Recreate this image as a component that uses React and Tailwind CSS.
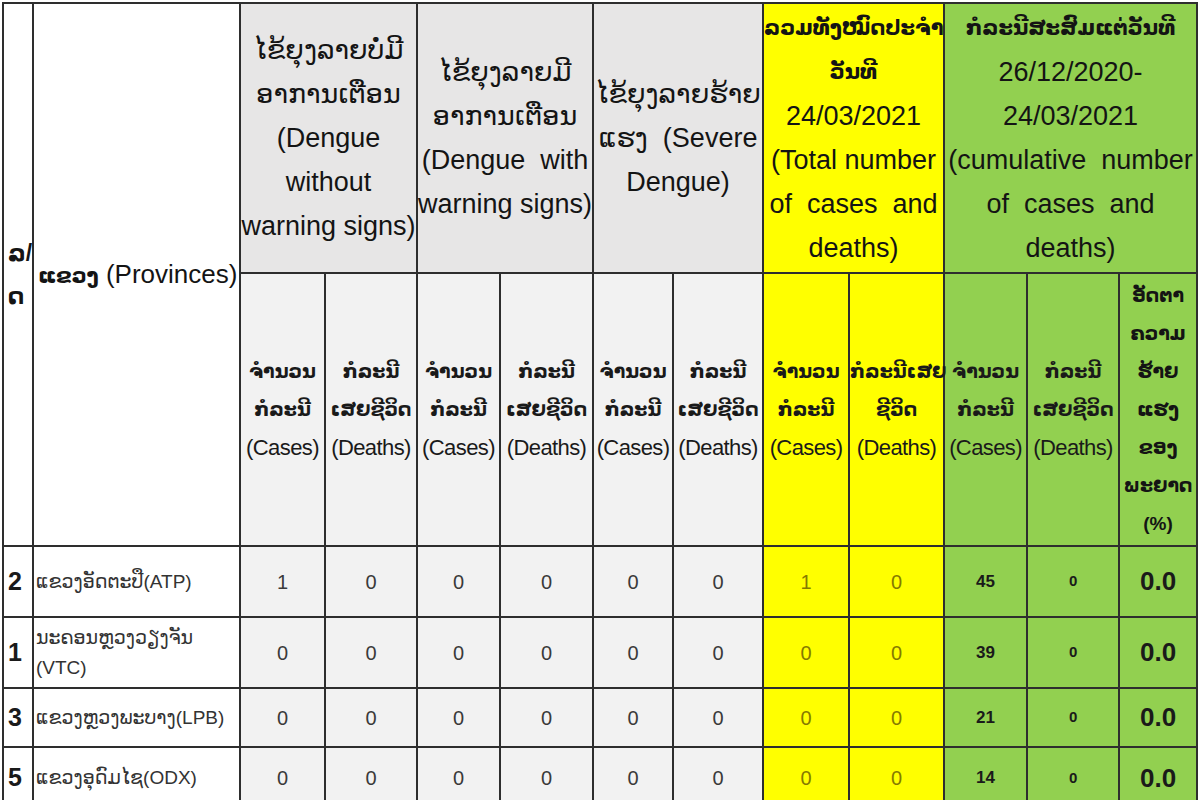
import React from "react";

const cols = [30, 207, 85, 92, 83, 93, 80, 90, 86, 95, 83, 92, 78];

const rows = [
  { n: "2", name: ["ແຂວງອັດຕະປື(ATP)"], gray: ["1", "0", "0", "0", "0", "0"], yel: ["1", "0"], cum: "45", h: "h-[71px]" },
  { n: "1", name: ["ນະຄອນຫຼວງວຽງຈັນ", "(VTC)"], gray: ["0", "0", "0", "0", "0", "0"], yel: ["0", "0"], cum: "39", h: "h-[71px]" },
  { n: "3", name: ["ແຂວງຫຼວງພະບາງ(LPB)"], gray: ["0", "0", "0", "0", "0", "0"], yel: ["0", "0"], cum: "21", h: "h-[59px]" },
  { n: "5", name: ["ແຂວງອຸດົມໄຊ(ODX)"], gray: ["0", "0", "0", "0", "0", "0"], yel: ["0", "0"], cum: "14", h: "h-[62px]" },
];

const bd = "border-2 border-[#2e2e2e]";

function Lines({ lines, bold = [] }) {
  return lines.map((l, i) => (
    <div key={i} className={`whitespace-pre ${bold.includes(i) ? "font-bold text-[21px]" : ""}`}>
      {l}
    </div>
  ));
}

function SubHead({ kind, bg }) {
  const lao = kind === "cases" ? ["ຈຳນວນ", "ກໍລະນີ"] : ["ກໍລະນີ", "ເສຍຊີວິດ"];
  const en = kind === "cases" ? "(Cases)" : "(Deaths)";
  return (
    <th className={`${bd} ${bg} p-0 text-center align-middle font-normal text-[22px] leading-[38px] text-[#1a1a1a]`}>
      <div className="whitespace-nowrap font-bold text-[19px]">{lao[0]}</div>
      <div className="whitespace-nowrap font-bold text-[19px]">{lao[1]}</div>
      <div className="whitespace-nowrap tracking-[-0.6px]">{en}</div>
    </th>
  );
}

export default function App() {
  return (
    <div className="w-[1200px] h-[800px] overflow-hidden bg-white pl-[2px] pt-[2px] font-['Liberation_Sans','DejaVu_Sans',sans-serif] text-[#141414]">
      <table className="table-fixed border-collapse w-[1194px]">
        <colgroup>
          {cols.map((w, i) => (
            <col key={i} style={{ width: w }} />
          ))}
        </colgroup>
        <thead>
          <tr className="h-[270px]">
            <th rowSpan={2} className={`${bd} bg-white p-0 pl-[4px] text-left align-middle font-bold text-[23px] leading-[43px]`}>
              <div>ລ/</div>
              <div>ດ</div>
            </th>
            <th rowSpan={2} className={`${bd} bg-white p-0 pl-[4px] text-left align-middle font-normal text-[26px] whitespace-nowrap`}>
              <span className="font-bold text-[21px]">ແຂວງ</span> (Provinces)
            </th>
            <th colSpan={2} className={`${bd} bg-[#e7e6e6] p-0 text-center align-middle font-normal text-[27px] leading-[44px]`}>
              <Lines lines={["ໄຂ້ຍຸງລາຍບໍ່ມີ", "ອາການເຕືອນ", "(Dengue", "without", "warning signs)"]} />
            </th>
            <th colSpan={2} className={`${bd} bg-[#e7e6e6] p-0 text-center align-middle font-normal text-[27px] leading-[44px]`}>
              <Lines lines={["ໄຂ້ຍຸງລາຍມີ", "ອາການເຕືອນ", "(Dengue  with", "warning signs)"]} />
            </th>
            <th colSpan={2} className={`${bd} bg-[#e7e6e6] p-0 text-center align-middle font-normal text-[27px] leading-[44px]`}>
              <Lines lines={["ໄຂ້ຍຸງລາຍຮ້າຍ", "ແຮງ  (Severe", "Dengue)"]} />
            </th>
            <th colSpan={2} className={`${bd} bg-[#ffff00] p-0 text-center align-middle font-normal text-[27px] leading-[44px]`}>
              <Lines
                lines={["ລວມທັງໝົດປະຈຳ", "ວັນທີ", "24/03/2021", "(Total number", "of  cases  and", "deaths)"]}
                bold={[0, 1]}
              />
            </th>
            <th colSpan={3} className={`${bd} bg-[#92d050] p-0 text-center align-middle font-normal text-[27px] leading-[44px]`}>
              <Lines
                lines={["ກໍລະນີສະສົມແຕ່ວັນທີ", "26/12/2020-", "24/03/2021", "(cumulative  number", "of  cases  and", "deaths)"]}
                bold={[0]}
              />
            </th>
          </tr>
          <tr className="h-[273px]">
            <SubHead kind="cases" bg="bg-[#f2f2f2]" />
            <SubHead kind="deaths" bg="bg-[#f2f2f2]" />
            <SubHead kind="cases" bg="bg-[#f2f2f2]" />
            <SubHead kind="deaths" bg="bg-[#f2f2f2]" />
            <SubHead kind="cases" bg="bg-[#f2f2f2]" />
            <SubHead kind="deaths" bg="bg-[#f2f2f2]" />
            <SubHead kind="cases" bg="bg-[#ffff00]" />
            <th className={`${bd} bg-[#ffff00] p-0 text-center align-middle font-normal text-[22px] leading-[38px] text-[#1a1a1a]`}>
              <div className="whitespace-nowrap font-bold text-[19px]">ກໍລະນີເສຍ</div>
              <div className="whitespace-nowrap font-bold text-[19px]">ຊີວິດ</div>
              <div className="whitespace-nowrap tracking-[-0.6px]">(Deaths)</div>
            </th>
            <SubHead kind="cases" bg="bg-[#92d050]" />
            <SubHead kind="deaths" bg="bg-[#92d050]" />
            <th className={`${bd} bg-[#92d050] p-0 text-center align-middle font-bold text-[19px] leading-[38px]`}>
              <Lines lines={["ອັດຕາ", "ຄວາມ", "ຮ້າຍ", "ແຮງ", "ຂອງ", "ພະຍາດ", "(%)"]} />
            </th>
          </tr>
        </thead>
        <tbody>
          {rows.map((r) => (
            <tr key={r.n} className={r.h}>
              <td className={`${bd} bg-white p-0 pl-[4px] align-middle text-[25px] font-bold text-[#1a1a1a]`}>{r.n}</td>
              <td className={`${bd} bg-white p-0 pl-[2px] align-middle text-[19px] leading-[30px] text-[#333]`}>
                {r.name.map((t, i) => (
                  <div key={i} className="whitespace-nowrap">
                    {t}
                  </div>
                ))}
              </td>
              {r.gray.map((v, i) => (
                <td key={i} className={`${bd} bg-[#f2f2f2] p-0 text-center align-middle text-[20px] text-[#3a3a3a]`}>
                  {v}
                </td>
              ))}
              {r.yel.map((v, i) => (
                <td key={i} className={`${bd} bg-[#ffff00] p-0 text-center align-middle text-[20px] text-[#857a00]`}>
                  {v}
                </td>
              ))}
              <td className={`${bd} bg-[#92d050] p-0 text-center align-middle text-[17px] font-bold text-[#1a1a1a]`}>{r.cum}</td>
              <td className={`${bd} bg-[#92d050] p-0 text-center align-middle text-[15px] font-bold text-[#1a1a1a]`}>0</td>
              <td className={`${bd} bg-[#92d050] p-0 text-center align-middle text-[26px] font-bold text-[#1a1a1a]`}>0.0</td>
            </tr>
          ))}
        </tbody>
      </table>
    </div>
  );
}
